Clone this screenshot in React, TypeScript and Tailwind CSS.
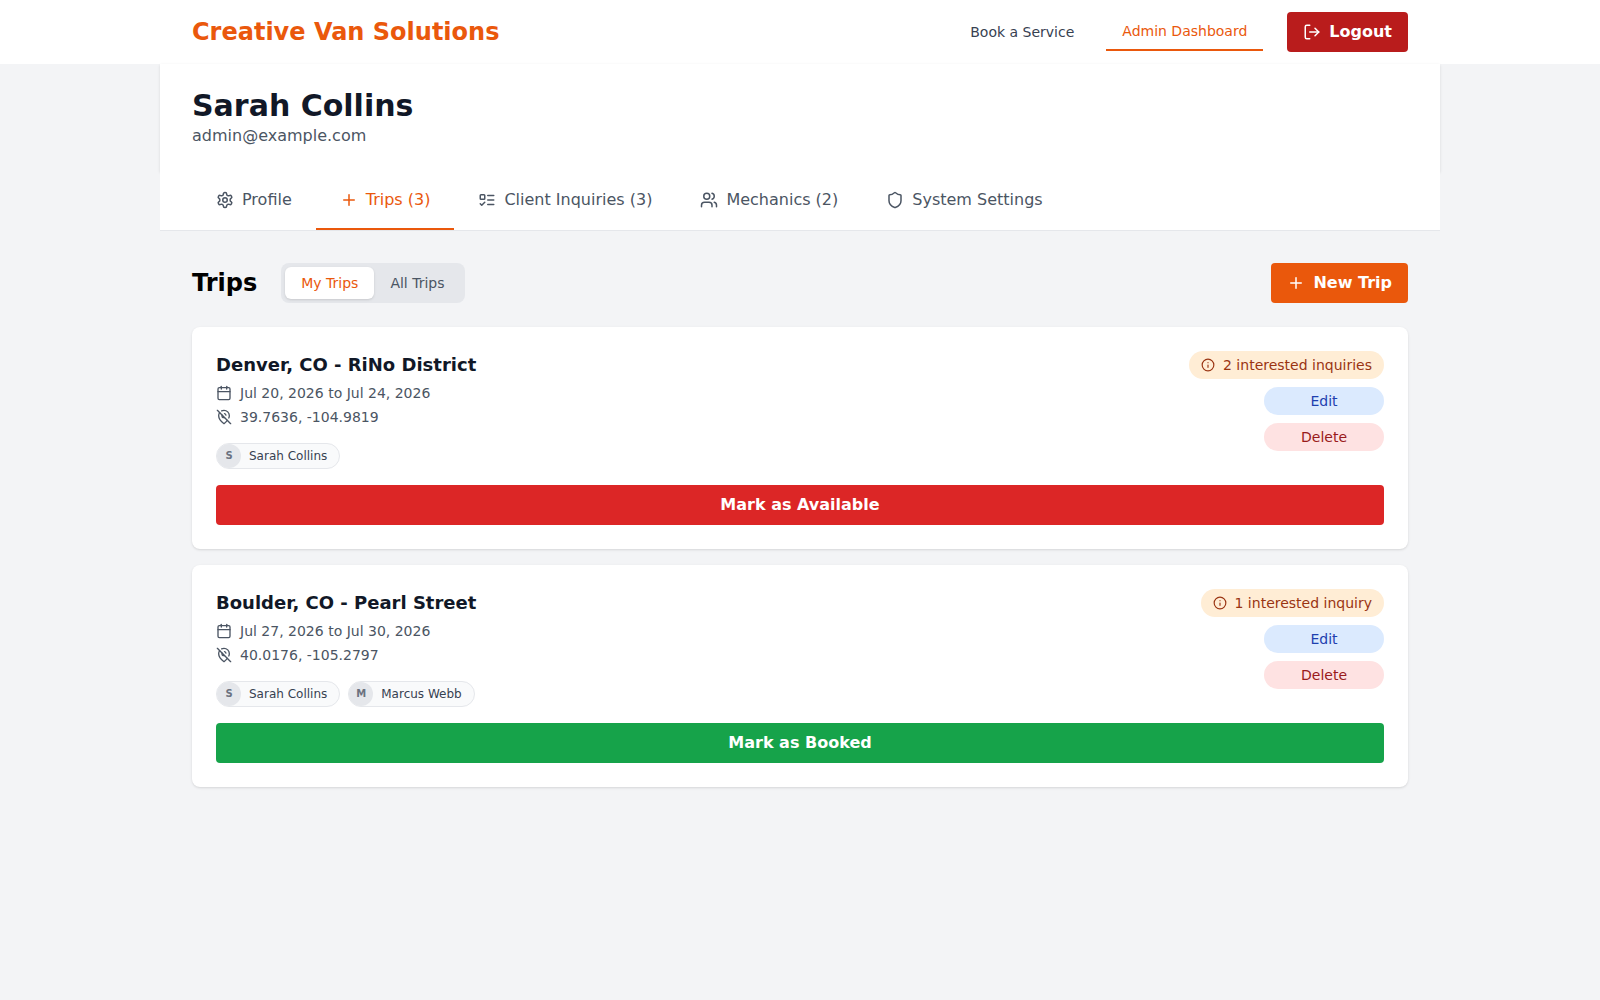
import { useState } from "react";
import type { ReactNode } from "react";
import { Calendar, Info, LogOut, Plus, Shield } from "lucide-react";
import { LuListTodo, LuSettings, LuUsers } from "react-icons/lu";

type Trip = {
  title: string;
  dates: string;
  coords: string;
  crew: string[];
  inquiries: string;
  booked: boolean;
};

const initialTrips: Trip[] = [
  {
    title: "Denver, CO - RiNo District",
    dates: "Jul 20, 2026 to Jul 24, 2026",
    coords: "39.7636, -104.9819",
    crew: ["Sarah Collins"],
    inquiries: "2 interested inquiries",
    booked: true,
  },
  {
    title: "Boulder, CO - Pearl Street",
    dates: "Jul 27, 2026 to Jul 30, 2026",
    coords: "40.0176, -105.2797",
    crew: ["Sarah Collins", "Marcus Webb"],
    inquiries: "1 interested inquiry",
    booked: false,
  },
];

const tabs: { label: string; icon: ReactNode }[] = [
  { label: "Profile", icon: <LuSettings size={18} /> },
  { label: "Trips (3)", icon: <Plus size={18} /> },
  { label: "Client Inquiries (3)", icon: <LuListTodo size={18} /> },
  { label: "Mechanics (2)", icon: <LuUsers size={18} /> },
  { label: "System Settings", icon: <Shield size={18} /> },
];

function PinOffIcon() {
  return (
    <svg
      className="size-4"
      viewBox="0 0 24 24"
      fill="none"
      stroke="currentColor"
      strokeWidth="2"
      strokeLinecap="round"
      strokeLinejoin="round"
      aria-hidden="true"
    >
      <path d="M5.43 5.43A8.06 8.06 0 0 0 4 10c0 6 8 12 8 12a29.94 29.94 0 0 0 5-5" />
      <path d="M19.18 13.52A8.66 8.66 0 0 0 20 10a8 8 0 0 0-8-8 7.88 7.88 0 0 0-3.52.82" />
      <path d="M9.13 9.13A2.78 2.78 0 0 0 9 10a3 3 0 0 0 3 3 2.78 2.78 0 0 0 .87-.13" />
      <path d="M14.9 9.25a3 3 0 0 0-2.15-2.16" />
      <path d="m2 2 20 20" />
    </svg>
  );
}

function Header() {
  return (
    <header className="bg-white">
      <div className="mx-auto flex h-16 max-w-7xl items-center justify-between px-8">
        <a href="#home" className="text-2xl font-bold text-[#ea580c]">
          Creative Van Solutions
        </a>
        <div className="flex items-center gap-6">
          <nav className="flex items-center gap-4 text-sm font-medium">
            <a href="#book" className="px-4 py-2 text-[#374151]">
              Book a Service
            </a>
            <a href="#admin" className="border-b-2 border-[#ea580c] px-4 py-2 text-[#ea580c]">
              Admin Dashboard
            </a>
          </nav>
          <button
            type="button"
            className="flex items-center gap-2 rounded bg-[#b91c1c] px-4 py-2 font-bold text-white"
          >
            <LogOut size={18} />
            Logout
          </button>
        </div>
      </div>
    </header>
  );
}

function TripCard({ trip, onToggle }: { trip: Trip; onToggle: () => void }) {
  return (
    <article className="rounded-lg bg-white p-6 shadow-sm">
      <div className="flex items-start justify-between">
        <div>
          <h3 className="text-lg font-bold text-[#111827]">{trip.title}</h3>
          <p className="mt-1 flex items-center gap-2 text-sm text-[#4b5563]">
            <Calendar size={16} />
            {trip.dates}
          </p>
          <p className="mt-1 flex items-center gap-2 text-sm text-[#4b5563]">
            <PinOffIcon />
            {trip.coords}
          </p>
          <ul className="mt-4 flex gap-2">
            {trip.crew.map((name) => (
              <li
                key={name}
                className="flex items-center gap-2 rounded-full border border-[#e5e7eb] bg-[#f9fafb] pr-3 text-xs font-medium text-[#374151]"
              >
                <span className="flex size-6 items-center justify-center rounded-full bg-[#e5e7eb] text-[10px] font-bold text-[#6b7280]">
                  {name[0]}
                </span>
                {name}
              </li>
            ))}
          </ul>
        </div>
        <div className="flex flex-col items-end gap-2 text-sm font-medium">
          <span className="flex items-center gap-2 rounded-full bg-[#ffedd5] px-3 py-1 text-[#9a3412]">
            <Info size={14} />
            {trip.inquiries}
          </span>
          <button type="button" className="w-30 rounded-full bg-[#dbeafe] py-1 text-[#1e40af]">
            Edit
          </button>
          <button type="button" className="w-30 rounded-full bg-[#fee2e2] py-1 text-[#991b1b]">
            Delete
          </button>
        </div>
      </div>
      <button
        type="button"
        onClick={onToggle}
        className={`mt-4 w-full rounded py-2 font-bold text-white ${
          trip.booked ? "bg-[#dc2626]" : "bg-[#16a34a]"
        }`}
      >
        {trip.booked ? "Mark as Available" : "Mark as Booked"}
      </button>
    </article>
  );
}

export default function App() {
  const [activeTab, setActiveTab] = useState("Trips (3)");
  const [scope, setScope] = useState("My Trips");
  const [trips, setTrips] = useState(initialTrips);

  const toggleTrip = (index: number) =>
    setTrips(trips.map((t, i) => (i === index ? { ...t, booked: !t.booked } : t)));

  return (
    <div className="min-h-screen bg-[#f3f4f6] font-['DejaVu_Sans',sans-serif] text-black">
      <Header />
      <div className="mx-auto max-w-7xl">
        <section className="bg-white px-8 py-6 shadow-sm">
          <h1 className="text-3xl font-bold text-[#111827]">Sarah Collins</h1>
          <p className="text-[#4b5563]">admin@example.com</p>
        </section>
        <nav className="relative flex border-b border-[#e5e7eb] bg-white px-8">
          {tabs.map((tab) => (
            <button
              key={tab.label}
              type="button"
              onClick={() => setActiveTab(tab.label)}
              className={`flex items-center gap-2 border-b-2 px-6 py-4 font-medium ${
                activeTab === tab.label
                  ? "border-[#ea580c] text-[#ea580c]"
                  : "border-transparent text-[#4b5563]"
              }`}
            >
              {tab.icon}
              {tab.label}
            </button>
          ))}
        </nav>
        <main className="px-8 py-8">
          <div className="mb-6 flex items-center justify-between">
            <div className="flex items-center gap-6">
              <h2 className="text-2xl font-bold">Trips</h2>
              <div className="flex rounded-lg bg-[#e5e7eb] p-1 text-sm font-medium">
                {["My Trips", "All Trips"].map((label) => (
                  <button
                    key={label}
                    type="button"
                    onClick={() => setScope(label)}
                    className={`rounded-md px-4 py-1.5 ${
                      scope === label ? "bg-white text-[#ea580c] shadow-sm" : "text-[#4b5563]"
                    }`}
                  >
                    {label}
                  </button>
                ))}
              </div>
            </div>
            <button
              type="button"
              className="flex items-center gap-2 rounded bg-[#ea580c] px-4 py-2 font-bold text-white"
            >
              <Plus size={18} />
              New Trip
            </button>
          </div>
          <div className="flex flex-col gap-4">
            {trips.map((trip, i) => (
              <TripCard key={trip.title} trip={trip} onToggle={() => toggleTrip(i)} />
            ))}
          </div>
        </main>
      </div>
    </div>
  );
}
